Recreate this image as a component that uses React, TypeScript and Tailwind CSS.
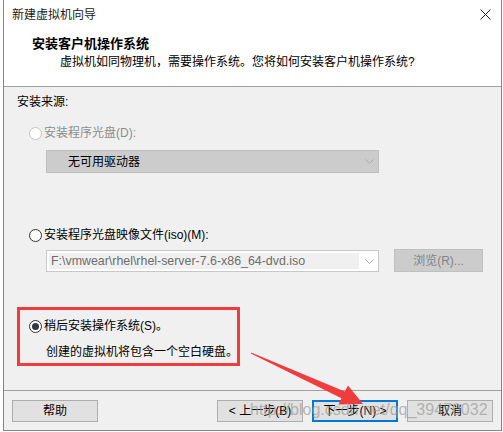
import React from "react";

function Radio({ state }: { state: "disabled" | "off" | "on" }) {
  if (state === "disabled")
    return <span className="w-[13px] h-[13px] rounded-full border border-[#c4c4c4] bg-white shrink-0" />;
  if (state === "off")
    return <span className="w-[13px] h-[13px] rounded-full border border-[#333333] bg-white shrink-0" />;
  return (
    <span className="w-[13px] h-[13px] rounded-full border border-[#333333] bg-white shrink-0 flex items-center justify-center">
      <span className="w-[7px] h-[7px] rounded-full bg-[#2f3a48]" />
    </span>
  );
}

function Chevron() {
  return (
    <svg width="9" height="5" viewBox="0 0 9 5" className="shrink-0">
      <path d="M0.5 0.5 L4.5 4.5 L8.5 0.5" fill="none" stroke="#a8a8a8" strokeWidth="1" />
    </svg>
  );
}

function Btn({ children, primary }: { children: React.ReactNode; primary?: boolean }) {
  return (
    <div
      className={
        "w-[86px] h-[22px] flex items-center justify-center bg-[#e1e1e1] text-[12px] leading-[16px] text-black " +
        (primary ? "border-2 border-[#0078d7]" : "border border-[#adadad]")
      }
    >
      {children}
    </div>
  );
}

export default function App() {
  return (
    <div className="relative w-[503px] h-[432px] bg-white overflow-hidden font-['Liberation_Sans','Noto_Sans_CJK_SC',sans-serif] text-black">
      <div className="ml-[3px] w-[499px] h-[431px] border-l border-r border-b border-[#858585] flex flex-col bg-[#f0f0f0]">
        {/* title + header */}
        <div className="bg-white h-[86px] flex flex-col shrink-0">
          <div className="h-[29px] flex items-center justify-between pl-[8px] pr-[10px]">
            <span className="text-[12px] leading-[16px] text-[#1a1a1a]">新建虚拟机向导</span>
            <svg width="11" height="11" viewBox="0 0 11 11">
              <path d="M0.5 0.5 L10.5 10.5 M10.5 0.5 L0.5 10.5" stroke="#222" strokeWidth="1" />
            </svg>
          </div>
          <div className="pl-[28px] pt-[6px] text-[13px] leading-[18px] font-bold">安装客户机操作系统</div>
          <div className="pl-[56px] mt-[1px] text-[12px] leading-[16px]">
            虚拟机如同物理机，需要操作系统。您将如何安装客户机操作系统?
          </div>
        </div>
        <div className="h-px bg-[#a0a0a0] shrink-0" />
        {/* body */}
        <div className="h-[303px] shrink-0 flex flex-col text-[12px] leading-[16px]">
          <div className="ml-[13px] mt-[7px]">安装来源:</div>
          <div className="ml-[25px] mt-[15px] flex items-center gap-[2px] text-[#8d8d8d]">
            <Radio state="disabled" />
            <span>安装程序光盘(D):</span>
          </div>
          <div className="ml-[42px] mt-[9px] w-[333px] h-[23px] bg-[#cccccc] border border-[#bfbfbf] flex items-center justify-between pl-[21px] pr-[4px]">
            <span className="text-black">无可用驱动器</span>
            <Chevron />
          </div>
          <div className="ml-[25px] mt-[54px] flex items-center gap-[2px]">
            <Radio state="off" />
            <span>安装程序光盘映像文件(iso)(M):</span>
          </div>
          <div className="ml-[42px] mt-[6px] flex items-start">
            <div className="mt-px w-[333px] h-[22px] bg-white border border-[#c8c8c8] flex items-center pl-[2px] pr-[4px]">
              <div className="w-[310px] h-[16px] bg-[#f0f0f0] flex items-center pl-[2px] text-[#6d6d6d] font-['Liberation_Sans',sans-serif] text-[12.4px]">
                F:\vmwear\rhel\rhel-server-7.6-x86_64-dvd.iso
              </div>
              <div className="flex-1 flex justify-end">
                <Chevron />
              </div>
            </div>
            <div className="ml-[15px] w-[89px] h-[23px] bg-[#cccccc] border border-[#bfbfbf] flex items-center justify-center text-[#838383]">
              浏览(R)...
            </div>
          </div>
          <div className="ml-[25px] mt-[46px] flex items-center gap-[2px]">
            <Radio state="on" />
            <span>稍后安装操作系统(S)。</span>
          </div>
          <div className="ml-[42px] mt-[10px]">创建的虚拟机将包含一个空白硬盘。</div>
        </div>
        <div className="h-px bg-[#a0a0a0] shrink-0" />
        {/* footer */}
        <div className="flex items-start pt-[9px] pl-[8px]">
          <Btn>帮助</Btn>
          <div className="ml-[119px] flex gap-[9px]">
            <Btn>&lt; 上一步(B)</Btn>
            <Btn primary>下一步(N) &gt;</Btn>
            <Btn>取消</Btn>
          </div>
        </div>
      </div>

      {/* annotation: red box */}
      <div className="absolute left-[17px] top-[307px] w-[223px] h-[59px] border-[3px] border-[#f03c3c]" />

      {/* annotation: arrow */}
      <svg className="absolute left-0 top-0 pointer-events-none" width="503" height="432" viewBox="0 0 503 432">
        <polygon
          points="250.8,353.5 251.2,352.5 344.8,391.5 348,385.5 363,404 338.5,404.5 341.5,398.2"
          fill="#f03c3c"
        />
      </svg>

      {/* watermark */}
      <div className="absolute left-[250px] top-[401px] text-[16px] leading-[18px] text-[#9a9a9a]/70 font-['Liberation_Sans',sans-serif] whitespace-nowrap pointer-events-none">
        http://blog.csdn.net/qq_39470032
      </div>
    </div>
  );
}
